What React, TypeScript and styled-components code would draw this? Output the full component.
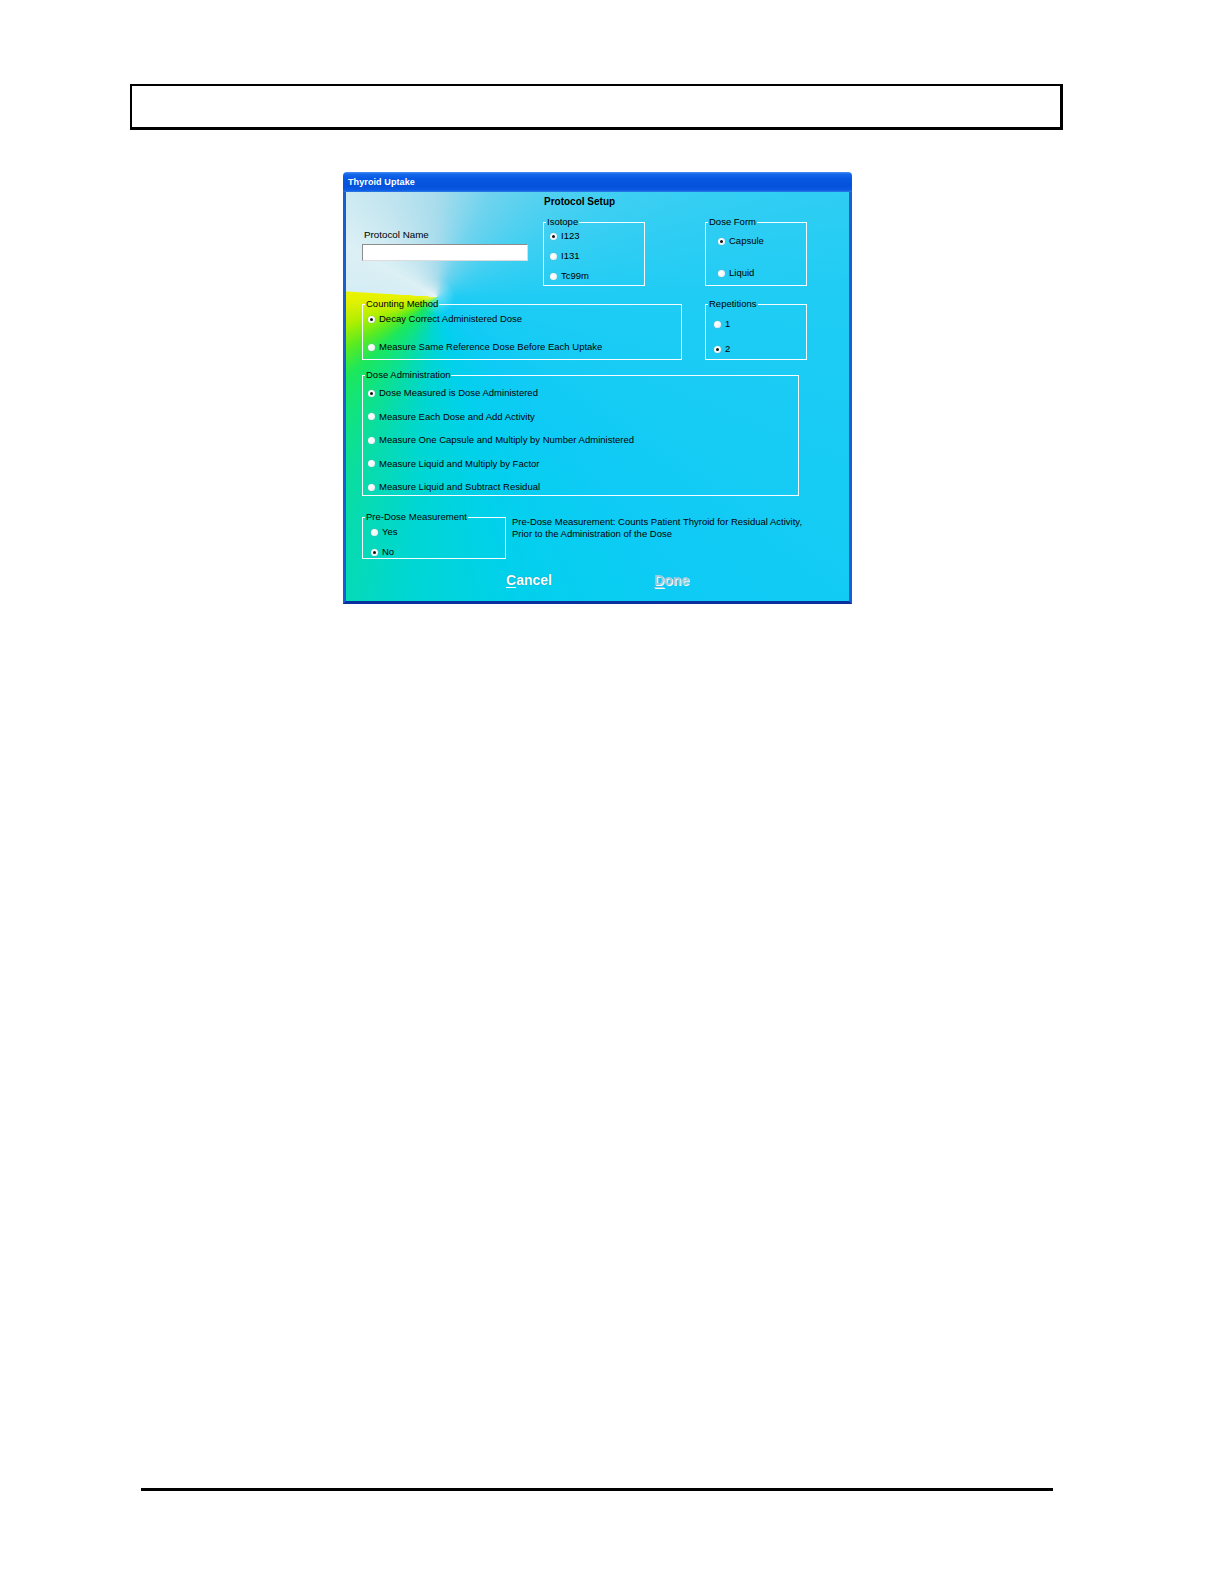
import React from "react";
import styled, { createGlobalStyle } from "styled-components";

const GlobalStyle = createGlobalStyle`
  html, body {
    margin: 0;
    padding: 0;
    background: #fff;
    font-family: "Liberation Sans", Arial, sans-serif;
  }
`;

const Page = styled.div`
  width: 1224px;
  min-height: 1584px;
  padding-top: 84px;
  box-sizing: border-box;
`;

const HeaderBox = styled.div`
  margin-left: 130px;
  width: 933px;
  height: 46px;
  box-sizing: border-box;
  border: 2px solid #000;
  border-right-width: 3px;
  border-bottom-width: 3px;
`;

const FooterRule = styled.div`
  margin: 884px 0 0 141px;
  width: 912px;
  height: 3px;
  background: #000;
`;

const Dialog = styled.div`
  margin: 42px 0 0 343px;
  width: 509px;
  display: flex;
  flex-direction: column;
`;

const TitleBar = styled.div`
  height: 20px;
  box-sizing: border-box;
  padding-left: 5px;
  display: flex;
  align-items: center;
  border-radius: 4px 4px 0 0;
  background: linear-gradient(
    180deg,
    #4a92f4 0,
    #1567ea 2px,
    #0658e2 7px,
    #0552dc 14px,
    #0a5ae4 18px,
    #2d7ae6 20px
  );
  color: #fff;
  font-size: 9px;
  font-weight: bold;
  letter-spacing: 0.1px;
`;

const Body = styled.div`
  height: 412px;
  box-sizing: border-box;
  border: 3px solid #1a5fd2;
  border-top: none;
  border-bottom-color: #0a2f9e;
  padding-left: 16px;
  display: flex;
  flex-direction: column;
  background:
    radial-gradient(circle at 91px 105px, rgba(255, 255, 255, 0.4) 0, rgba(255, 255, 255, 0) 18px),
    conic-gradient(
      from 0deg at 91px 105px,
      #a8dcec 0deg,
      #6ed3ee 28deg,
      #3fcff2 60deg,
      #1fccf4 90deg,
      #0ecbf5 140deg,
      #02d0ec 165deg,
      #00d6d4 185deg,
      #06dbb0 200deg,
      #10e382 215deg,
      #1ce75c 228deg,
      #58eb22 240deg,
      #aeef00 253deg,
      #e0f100 266deg,
      #eaf300 273deg,
      #d4edf4 274deg,
      #dcf0f5 300deg,
      #c4e6f0 330deg,
      #a8dcec 360deg
    );
`;

const Row = styled.div<{ $mt?: number }>`
  display: flex;
  align-items: flex-start;
  margin-top: ${({ $mt }) => $mt ?? 0}px;
`;

const Column = styled.div<{ $w: number; $pt: number; $ml?: number }>`
  width: ${({ $w }) => $w}px;
  padding-top: ${({ $pt }) => $pt}px;
  margin-left: ${({ $ml }) => $ml ?? 0}px;
  display: flex;
  flex-direction: column;
`;

const Heading = styled.div`
  margin-left: 1px;
  font-size: 10px;
  line-height: 12px;
  font-weight: bold;
  color: #000;
`;

const FieldLabel = styled.div`
  margin-left: 2px;
  font-size: 9.8px;
  line-height: 12px;
  color: #000;
`;

const TextInput = styled.input`
  margin-top: 3px;
  width: 166px;
  height: 17px;
  box-sizing: border-box;
  padding: 0 3px;
  background: #fff;
  border: 1px solid;
  border-color: #8c8c8c #dcdcdc #dcdcdc #8c8c8c;
  outline: none;
  font-size: 9.5px;
  font-family: inherit;
`;

const GroupBox = styled.fieldset<{ $w: number; $ml?: number; $mt?: number }>`
  margin: 0;
  margin-left: ${({ $ml }) => $ml ?? 0}px;
  margin-top: ${({ $mt }) => $mt ?? 0}px;
  padding: 0;
  min-width: 0;
  width: ${({ $w }) => $w}px;
  box-sizing: border-box;
  border: 1px solid #f4fcff;
`;

const Legend = styled.legend`
  margin-left: 2px;
  padding: 0 1px;
  font-size: 9.5px;
  line-height: 10px;
  color: #000;
`;

const RadioList = styled.div<{ $pt: number; $pb: number; $pl: number; $gap: number }>`
  display: flex;
  flex-direction: column;
  padding: ${({ $pt, $pb, $pl }) => `${$pt}px 0 ${$pb}px ${$pl}px`};
  gap: ${({ $gap }) => $gap}px;
`;

const RadioRow = styled.div`
  display: flex;
  align-items: center;
  height: 12px;
  font-size: 9.5px;
  line-height: 12px;
  color: #000;
  white-space: nowrap;
`;

const RadioDot = styled.span<{ $checked?: boolean }>`
  flex: none;
  width: 7px;
  height: 7px;
  margin-right: 4px;
  border-radius: 50%;
  display: inline-flex;
  align-items: center;
  justify-content: center;
  background: radial-gradient(circle at 35% 35%, #ffffff 0, #f4f8fa 50%, #d9e6ec 100%);
  box-shadow: 0 0 0 0.5px rgba(140, 170, 180, 0.55);

  &::after {
    content: "";
    display: ${({ $checked }) => ($checked ? "block" : "none")};
    width: 3px;
    height: 3px;
    border-radius: 50%;
    background: #111;
  }
`;

const Description = styled.div`
  margin: 4px 0 0 6px;
  font-size: 9.5px;
  line-height: 12px;
  color: #000;
  white-space: nowrap;
`;

const ButtonRow = styled.div`
  display: flex;
  margin: 13px 0 0 144px;
`;

const DialogButton = styled.div<{ $disabled?: boolean }>`
  font-size: 14px;
  line-height: 16px;
  font-weight: bold;
  color: ${({ $disabled }) => ($disabled ? "#9fcadb" : "#ffffff")};
  text-shadow: ${({ $disabled }) =>
    $disabled ? "1px 1px 0 #f2fbff" : "0 0 1px rgba(0, 60, 90, 0.6)"};
  cursor: default;

  & + & {
    margin-left: 102px;
  }

  u {
    text-decoration-thickness: 1px;
    text-underline-offset: 2px;
  }
`;

type RadioProps = { label: string; checked?: boolean };

const Radio: React.FC<RadioProps> = ({ label, checked }) => (
  <RadioRow>
    <RadioDot $checked={checked} />
    <span>{label}</span>
  </RadioRow>
);

export default function App() {
  return (
    <>
      <GlobalStyle />
      <Page>
        <HeaderBox />

        <Dialog>
          <TitleBar>Thyroid Uptake</TitleBar>
          <Body>
            <Row>
              <Column $w={166} $pt={37}>
                <FieldLabel>Protocol Name</FieldLabel>
                <TextInput type="text" />
              </Column>

              <Column $w={102} $pt={4} $ml={15}>
                <Heading>Protocol Setup</Heading>
                <GroupBox $w={102} $mt={9}>
                  <Legend>Isotope</Legend>
                  <RadioList $pt={3} $pb={3} $pl={6} $gap={8}>
                    <Radio label="I123" checked />
                    <Radio label="I131" />
                    <Radio label="Tc99m" />
                  </RadioList>
                </GroupBox>
              </Column>

              <Column $w={102} $pt={25} $ml={60}>
                <GroupBox $w={102}>
                  <Legend>Dose Form</Legend>
                  <RadioList $pt={8} $pb={6} $pl={12} $gap={20}>
                    <Radio label="Capsule" checked />
                    <Radio label="Liquid" />
                  </RadioList>
                </GroupBox>
              </Column>
            </Row>

            <Row $mt={13}>
              <GroupBox $w={320}>
                <Legend>Counting Method</Legend>
                <RadioList $pt={4} $pb={6} $pl={5} $gap={16}>
                  <Radio label="Decay Correct Administered Dose" checked />
                  <Radio label="Measure Same Reference Dose Before Each Uptake" />
                </RadioList>
              </GroupBox>

              <GroupBox $w={102} $ml={23}>
                <Legend>Repetitions</Legend>
                <RadioList $pt={9} $pb={4} $pl={8} $gap={13}>
                  <Radio label="1" />
                  <Radio label="2" checked />
                </RadioList>
              </GroupBox>
            </Row>

            <Row $mt={10}>
              <GroupBox $w={437}>
                <Legend>Dose Administration</Legend>
                <RadioList $pt={7} $pb={2} $pl={5} $gap={11.5}>
                  <Radio label="Dose Measured is Dose Administered" checked />
                  <Radio label="Measure Each Dose and Add Activity" />
                  <Radio label="Measure One Capsule and Multiply by Number Administered" />
                  <Radio label="Measure Liquid and Multiply by Factor" />
                  <Radio label="Measure Liquid and Subtract Residual" />
                </RadioList>
              </GroupBox>
            </Row>

            <Row $mt={16}>
              <GroupBox $w={144}>
                <Legend>Pre-Dose Measurement</Legend>
                <RadioList $pt={4} $pb={0} $pl={8} $gap={8}>
                  <Radio label="Yes" />
                  <Radio label="No" checked />
                </RadioList>
              </GroupBox>
              <Description>
                Pre-Dose Measurement: Counts Patient Thyroid for Residual Activity,
                <br />
                Prior to the Administration of the Dose
              </Description>
            </Row>

            <ButtonRow>
              <DialogButton>
                <u>C</u>ancel
              </DialogButton>
              <DialogButton $disabled>
                <u>D</u>one
              </DialogButton>
            </ButtonRow>
          </Body>
        </Dialog>

        <FooterRule />
      </Page>
    </>
  );
}
